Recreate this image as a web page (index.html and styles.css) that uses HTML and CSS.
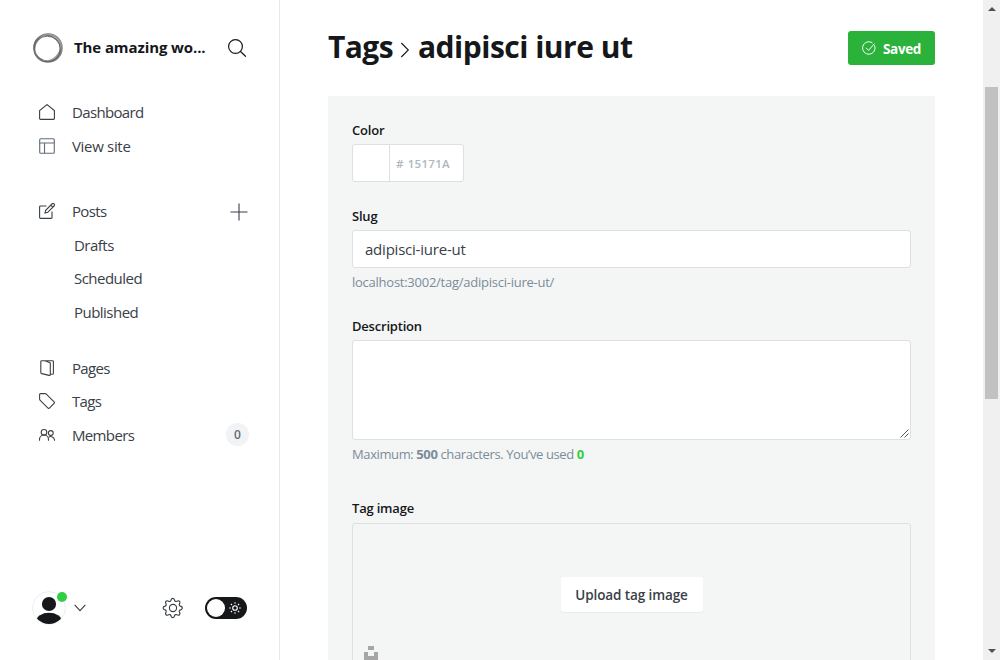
FILE: index.html
```html
<!DOCTYPE html>
<html lang="en">
<head>
<meta charset="utf-8">
<title>Tags - adipisci iure ut</title>
<link rel="stylesheet" href="styles.css">
</head>
<body>
<div class="app">
  <nav class="sidebar">
    <header class="site">
      <svg class="site-logo" viewBox="0 0 32 32" fill="none">
        <circle cx="16" cy="16" r="13.800" stroke="#888" stroke-width="2"/>
        <ellipse cx="15.500" cy="16.600" rx="13.600" ry="12.600" stroke="#666" stroke-width="1" transform="rotate(35 16 16)"/>
        <ellipse cx="16" cy="15.500" rx="14.200" ry="12.200" stroke="#999" stroke-width="1.300" transform="rotate(-50 16 16)"/>
        <ellipse cx="15.200" cy="17" rx="13" ry="12.800" stroke="#555" stroke-width=".8"/>
      </svg>
      <span class="site-name">The amazing wo...</span>
      <svg class="search" viewBox="0 0 18 18" fill="none" stroke="#15171a" stroke-width="1.2" stroke-linecap="round"><circle cx="7.5" cy="7.5" r="6.9"/><path d="M12.5 12.5l5 4.8"/></svg>
    </header>
    <ul class="menu">
      <li><svg viewBox="0 0 16 16"><path d="M.6 6.6L8 .6l7.400 6v7.900a.9.9 0 0 1-.9.9h-13a.9.9 0 0 1-.9-.9z"/></svg><span>Dashboard</span></li>
      <li><svg class="soft" viewBox="0 0 16 16"><rect x=".7" y=".7" width="14.600" height="14.600" rx="1"/><path d="M.7 5h14.600M5.500 5v10.300"/></svg><span class="view-site">View site</span></li>
    </ul>
    <ul class="menu menu-posts">
      <li><svg viewBox="0 0 16 16"><path d="M7.500 3H1.500a.9.9 0 0 0-.9.900v10.600a.9.9 0 0 0 .9.900h10.600a.9.9 0 0 0 .9-.9V8.500M6 10l.7-2.700L12.900 1a1.400 1.400 0 0 1 2.100 2L8.700 9.300zM11.700 2.200l2.100 2"/></svg><span>Posts</span>
        <svg class="plus" viewBox="0 0 18 18"><path d="M9 .5v17M.5 9h17"/></svg></li>
      <li class="sub"><span>Drafts</span></li>
      <li class="sub"><span>Scheduled</span></li>
      <li class="sub"><span>Published</span></li>
    </ul>
    <ul class="menu menu-content">
      <li><svg viewBox="0 0 16 16"><path d="M5 .7h8.500a.9.9 0 0 1 .9.900v11.800a.9.9 0 0 1-.9.9h-2M2.700.7h3l4.800 1.700a1 1 0 0 1 .8 1v11.200a.8.8 0 0 1-1.100.8l-7.500-1.800a1 1 0 0 1-.9-1V1.600a.9.9 0 0 1 .9-.9z"/></svg><span>Pages</span></li>
      <li><svg viewBox="0 0 16 16"><path d="M1.500.6H6a2 2 0 0 1 1.300.5l7.800 7.800a1 1 0 0 1 0 1.400l-4.700 4.800a1 1 0 0 1-1.400 0L1.200 7.400A2 2 0 0 1 .6 6V1.500a.9.9 0 0 1 .9-.9z"/></svg><span>Tags</span></li>
      <li><svg viewBox="0 0 16 16"><circle cx="5" cy="5.300" r="2.800"/><circle cx="11.800" cy="6" r="2.400"/><path d="M.5 13.700v-1.200a4.500 4.500 0 0 1 9 0v1.200M9.600 10.200a3.800 3.800 0 0 1 5.900 2.800v.7"/></svg><span>Members</span><b class="count">0</b></li>
    </ul>
    <footer class="user-bar">
      <div class="avatar">
        <svg viewBox="0 0 34 34"><defs><clipPath id="face"><circle cx="17" cy="17" r="16"/></clipPath></defs><circle cx="17" cy="17" r="16.400" fill="#fff" stroke="#e5e8eb" stroke-width=".8"/><g clip-path="url(#face)" fill="#15171a"><circle cx="17" cy="13" r="7.100"/><ellipse cx="17" cy="30" rx="12.800" ry="8.300"/></g></svg>
        <i class="online"></i>
      </div>
      <svg class="chevron" viewBox="0 0 12 8"><path d="M.7.8L6 6.700 11.300.8"/></svg>
      <svg class="gear" viewBox="0 0 24 24"><circle cx="12" cy="12" r="4.300"/><path d="M10.100 2.900a2 2 0 0 1 3.800 0l.3 1a2 2 0 0 0 2.700 1.100l1-.5a2 2 0 0 1 2.600 2.600l-.5 1a2 2 0 0 0 1.100 2.700l1 .3a2 2 0 0 1 0 3.800l-1 .3a2 2 0 0 0-1.100 2.700l.5 1a2 2 0 0 1-2.600 2.600l-1-.5a2 2 0 0 0-2.700 1.100l-.3 1a2 2 0 0 1-3.800 0l-.3-1A2 2 0 0 0 7.100 21l-1 .5a2 2 0 0 1-2.600-2.600l.5-1a2 2 0 0 0-1.100-2.700l-1-.3a2 2 0 0 1 0-3.800l1-.3A2 2 0 0 0 4 8.100l-.5-1a2 2 0 0 1 2.600-2.600l1 .5a2 2 0 0 0 2.700-1.100z" transform="translate(-.3 -1)"/></svg>
      <span class="night"><i></i><svg viewBox="0 0 12 12"><circle cx="6" cy="6" r="2.300"/><path d="M6 .2v1.600M6 10.200v1.600M.2 6h1.600M10.200 6h1.600M1.900 1.900L3 3M9 9l1.100 1.100M1.900 10.100L3 9M9 3l1.100-1.100"/></svg></span>
    </footer>
  </nav>
  <main class="content">
    <header class="heading">
      <h1><span class="crumb">Tags</span><svg viewBox="0 0 10 16"><path d="M1.300 1l7 7-7 7"/></svg><span class="current">adipisci iure ut</span></h1>
      <button class="saved"><svg viewBox="0 0 14 14"><path d="M12.400 4.300A6.200 6.200 0 1 1 10.500 2M4 6.800l2.500 2.600L12.500 2.600"/></svg><span>Saved</span></button>
    </header>
    <section class="panel">
      <label>Color</label>
      <div class="color-field"><span class="swatch"></span><span class="hex"><span>#</span><span class="hex-value">15171A</span></span></div>
      <label class="slug-label">Slug</label>
      <div class="text-field"><span>adipisci-iure-ut</span></div>
      <p class="hint url">localhost:3002/tag/adipisci-iure-ut/</p>
      <label class="desc-label">Description</label>
      <div class="area"><svg viewBox="0 0 9 9"><path d="M.5 8.500l8-8M4.500 8.500l4-4"/></svg></div>
      <p class="hint limit">Maximum: <b>500</b> characters. You’ve used <b class="used">0</b></p>
      <label class="image-label">Tag image</label>
      <div class="drop">
        <button class="upload"><span>Upload tag image</span></button>
        <svg class="unsplash" viewBox="0 0 14 14"><path d="M4 0h6v4H4zM0 6h4v4h6V6h4v8H0z"/></svg>
      </div>
    </section>
  </main>
  <div class="scrollbar">
    <svg viewBox="0 0 8 4"><path d="M4 0l4 4H0z"/></svg>
    <i class="thumb"></i>
    <svg class="down" viewBox="0 0 8 4"><path d="M0 0h8L4 4z"/></svg>
  </div>
</div>
</body>
</html>
```
FILE: styles.css
```css
* { box-sizing: border-box; }
body { margin: 0; font-family: "Open Sans", "Noto Sans", sans-serif; color: #15171a; background: #fff; }
svg { display: block; flex: none; }
.app { display: flex; width: 1000px; height: 660px; overflow: hidden; }
span, label, p { white-space: nowrap; }

.sidebar { width: 280px; flex: none; display: flex; flex-direction: column; border-right: 1px solid #e6e9eb; padding: 32px 32px 35px; }
.site { display: flex; align-items: center; height: 32px; }
.site-logo { width: 32px; height: 32px; }
.site-name { width: 144px; margin-left: 10px; padding-bottom: 2px; font-size: 15px; font-weight: 700; letter-spacing: -.1px; }
.search { width: 18px; height: 18px; margin-left: 10px; }

.menu { list-style: none; margin: 31.5px 0 0; padding: 0; }
.menu-posts { margin-top: 32px; }
.menu-content { margin-top: 22.5px; }
.menu li { display: flex; align-items: center; height: 33.5px; padding-left: 7px; font-size: 15px; color: #394047; letter-spacing: -.65px; }
.menu li .view-site { letter-spacing: -.32px; }
.menu li svg { width: 16px; height: 16px; margin-right: 17px; fill: none; stroke: #394047; stroke-width: 1.1; }
.menu li svg.soft { stroke: #626d79; }
.menu li.sub { padding-left: 42px; letter-spacing: -.52px; }
.menu li svg.plus { width: 18px; height: 18px; margin: 1px -1px 0 auto; stroke: #394047; }
.count { width: 23px; height: 23px; margin: 0 -2px 0 auto; border-radius: 50%; background: #f1f3f4; font-size: 12px; font-weight: 600; line-height: 24px; text-align: center; color: #626d79; letter-spacing: 0; }

.user-bar { display: flex; align-items: center; height: 34px; margin-top: auto; }
.avatar { position: relative; width: 34px; height: 34px; }
.online { position: absolute; top: 1px; right: -1px; width: 10px; height: 10px; border-radius: 50%; background: #30cf43; }
.chevron { width: 12px; height: 8px; margin-left: 8px; fill: none; stroke: #394047; stroke-width: 1.1; }
.gear { width: 20px; height: 20px; margin-left: 77px; overflow: visible; fill: none; stroke: #394047; stroke-width: 1.4; }
.night { display: flex; align-items: center; width: 42px; height: 22px; margin-left: 22px; padding: 0 6px 0 2px; border-radius: 11px; background: #15171a; }
.night i { width: 18px; height: 18px; border-radius: 50%; background: #fff; }
.night svg { width: 12px; height: 12px; margin-left: auto; fill: none; stroke: #fff; stroke-width: 1.1; }

.content { width: 703px; flex: none; padding: 0 48px; }
.heading { display: flex; justify-content: space-between; align-items: center; height: 96px; }
h1 { display: flex; align-items: center; margin: 0; font-size: 30px; font-weight: 700; line-height: 40px; }
h1 span { padding-bottom: 2px; }
h1 svg { width: 10px; height: 16px; margin: 4px 8px 0 7px; fill: none; stroke: #15171a; stroke-width: 1.1; }
.crumb { width: 65px; letter-spacing: -.6px; }
.current { letter-spacing: -.5px; }
button { border: 0; padding: 0; font-family: inherit; display: flex; align-items: center; }
.saved { width: 87px; height: 34px; padding: 2px 0 0 14px; border-radius: 3px; background: #2ab23a; color: #fff; font-size: 13.5px; font-weight: 700; letter-spacing: -.35px; }
.saved svg { width: 14px; height: 14px; margin: -3px 7px 0 0; fill: none; stroke: #fff; stroke-width: 1; }
.panel { height: 570px; padding: 24px; background: #f4f6f6; overflow: hidden; }
label { display: block; height: 20px; line-height: 20px; font-size: 13px; font-weight: 600; margin-bottom: 4px; letter-spacing: -.2px; }
.color-field { display: flex; width: 112px; height: 38px; border: 1px solid #dddfe1; border-radius: 3px; background: #fff; }
.swatch { width: 37px; border-right: 1px solid #dddfe1; }
.hex { display: flex; align-items: center; gap: 4px; padding: 1px 0 0 6px; font-size: 11.5px; font-weight: 600; letter-spacing: .3px; color: #aeb7c1; }
.slug-label { margin-top: 24px; }
.text-field { display: flex; align-items: center; height: 38px; padding-left: 12px; border: 1px solid #dddfe1; border-radius: 3px; background: #fff; font-size: 15px; color: #394047; letter-spacing: -.22px; }
.hint { margin: 4px 0 0; height: 20px; line-height: 20px; font-size: 13px; color: #7c8b9a; }
.url { letter-spacing: -.25px; }
.limit { letter-spacing: -.39px; }
.desc-label { margin-top: 24px; }
.area { display: flex; align-items: flex-end; justify-content: flex-end; height: 100px; padding: 1px; border: 1px solid #dddfe1; border-radius: 3px; background: #fff; }
.area svg { width: 9px; height: 9px; fill: none; stroke: #555; stroke-width: 1; }
.used { color: #30cf43; }
.image-label { margin-top: 34px; margin-bottom: 5px; }
.drop { height: 170px; padding: 53px 11px 0; border: 1px solid #dddfe1; border-radius: 3px; }
.upload { width: 142px; height: 35px; margin: 0 auto; padding-top: 1px; justify-content: center; border-radius: 3px; background: #fff; box-shadow: 0 1px 1px rgba(0,0,0,.05); font-size: 13.5px; font-weight: 600; letter-spacing: -.1px; color: #394047; }
.unsplash { width: 14px; height: 14px; margin-top: 34px; fill: #a6a6a6; }

.scrollbar { width: 17px; flex: none; height: 660px; display: flex; flex-direction: column; align-items: center; padding: 7px 0; background: #f0f0f0; }
.scrollbar svg { width: 8px; height: 4px; fill: #505050; }
.thumb { width: 13px; height: 312px; margin-top: 76px; background: #c1c1c1; }
.scrollbar .down { margin-top: auto; }
```
